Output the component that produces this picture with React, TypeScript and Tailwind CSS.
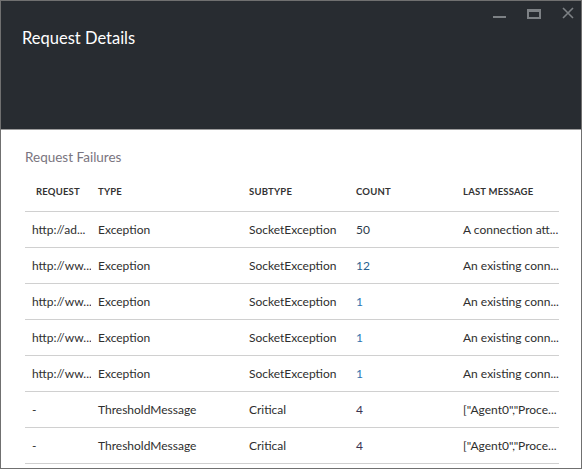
import React from "react";

interface Failure {
	request: string;
	type: string;
	subtype: string;
	count: string;
	countColor: string;
	message: string;
}

const rows: Failure[] = [
	{ request: "http://ad...", type: "Exception", subtype: "SocketException", count: "50", countColor: "text-[#2b3a4a]", message: "A connection att..." },
	{ request: "http://ww...", type: "Exception", subtype: "SocketException", count: "12", countColor: "text-[#2a5f8f]", message: "An existing conn..." },
	{ request: "http://ww...", type: "Exception", subtype: "SocketException", count: "1", countColor: "text-[#2f74b0]", message: "An existing conn..." },
	{ request: "http://ww...", type: "Exception", subtype: "SocketException", count: "1", countColor: "text-[#2f74b0]", message: "An existing conn..." },
	{ request: "http://ww...", type: "Exception", subtype: "SocketException", count: "1", countColor: "text-[#2f74b0]", message: "An existing conn..." },
	{ request: "-", type: "ThresholdMessage", subtype: "Critical", count: "4", countColor: "text-[#3b3350]", message: "[\"Agent0\",\"Proce..." },
	{ request: "-", type: "ThresholdMessage", subtype: "Critical", count: "4", countColor: "text-[#3b3350]", message: "[\"Agent0\",\"Proce..." },
];

const cols = "grid grid-cols-[66px_151px_107px_107px_103px]";

export default function App() {
	return (
		<div className="w-[582px] h-[469px] border border-[#707070] bg-white flex flex-col overflow-hidden font-['Lato','Open_Sans',sans-serif]">
			{/* Header */}
			<div className="h-[129px] shrink-0 bg-[#282c31] border-b border-[#9c9c9c] relative">
				<h1 className="pl-[21px] pt-[25px] text-[16.5px] text-white leading-[24px]">
					Request Details
				</h1>
				<div className="absolute right-[7px] top-[4px] flex items-start gap-[21px] text-[#7d8185]">
					<div className="w-[13px] h-[13px] flex items-end">
						<div className="w-[13px] h-[2px] bg-[#7d8185]" />
					</div>
					<div className="w-[14px] h-[10px] border-2 border-t-[3px] border-[#7d8185] mt-[4px]" />
					<svg width="12" height="12" viewBox="0 0 12 12" className="mt-[2px]">
						<path d="M1 1 L11 11 M11 1 L1 11" stroke="#7d8185" strokeWidth="1.6" />
					</svg>
				</div>
			</div>

			{/* Body */}
			<div className="pl-[24px] pr-[22px]">
				<div className="pt-[17px] text-[13.5px] text-[#7a7580] leading-[20px]">
					Request Failures
				</div>
				<div className="mt-[10px] text-[12px] text-[#2e2e2e]">
					<div className={`${cols} h-[35px] border-b border-[#d0d0d0] items-end pb-[13px] text-[9.5px] leading-[12px] font-bold text-[#333] tracking-[0.2px]`}>
						<div className="pl-[11px]">REQUEST</div>
						<div className="pl-[7px]">TYPE</div>
						<div className="pl-[7px]">SUBTYPE</div>
						<div className="pl-[7px]">COUNT</div>
						<div className="pl-[7px]">LAST MESSAGE</div>
					</div>
					{rows.map((r, i) => (
						<div key={i} className={`${cols} h-[36px] border-b border-[#d0d0d0] items-center`}>
							<div className="pl-[7px] whitespace-nowrap overflow-hidden">{r.request}</div>
							<div className="pl-[7px] whitespace-nowrap">{r.type}</div>
							<div className="pl-[7px] whitespace-nowrap">{r.subtype}</div>
							<div className={`pl-[7px] ${r.countColor}`}>{r.count}</div>
							<div className="pl-[7px] whitespace-nowrap overflow-hidden">{r.message}</div>
						</div>
					))}
				</div>
			</div>
		</div>
	);
}
